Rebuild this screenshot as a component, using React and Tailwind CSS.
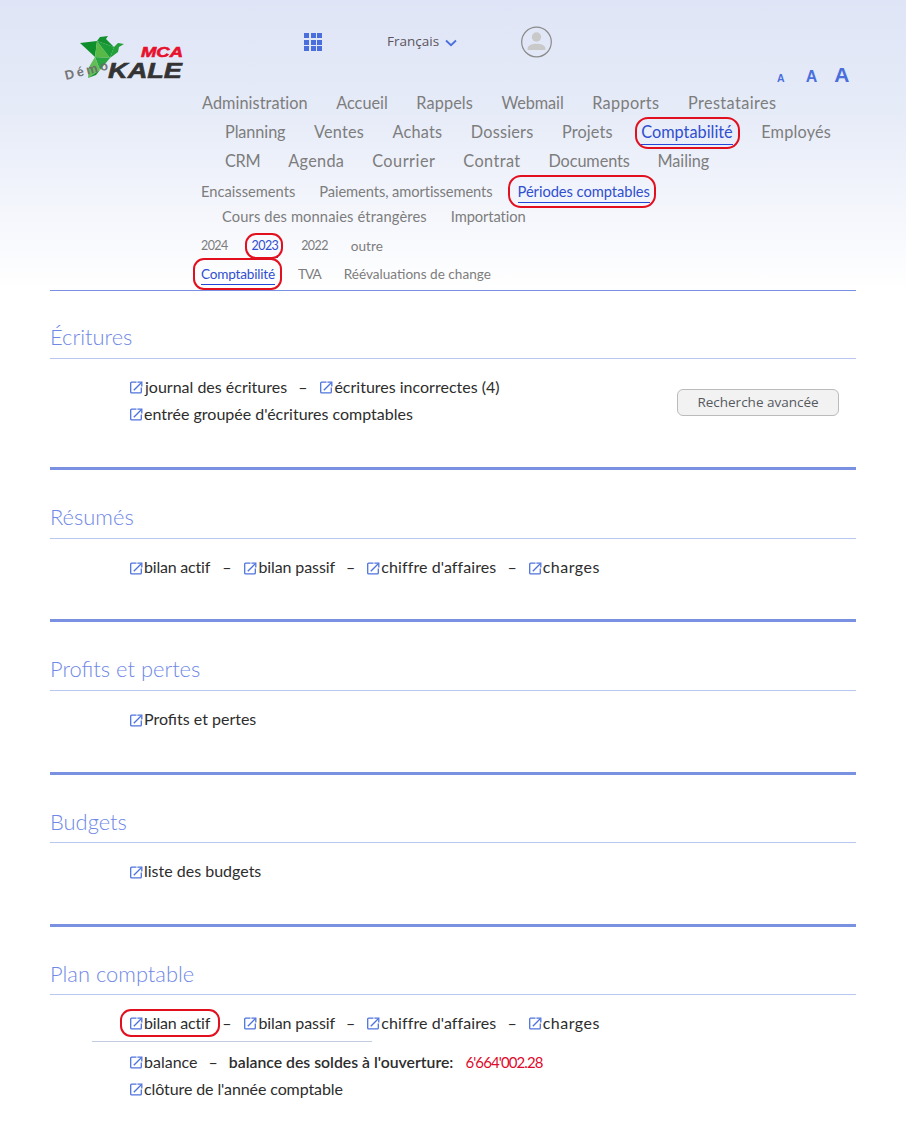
const font = "font-['Lato','Noto_Sans',sans-serif]";

function Ext() {
  return (
    <svg width="13" height="13" viewBox="0 0 13 13" fill="none" className="shrink-0 mr-px translate-y-px" stroke="#4f73dc" strokeWidth="1.3">
      <path d="M6.5 1.2H1.6a.9.9 0 0 0-.9.9v8.8c0 .5.4.9.9.9h8.8c.5 0 .9-.4.9-.9V6.5" />
      <path d="M3.8 9.2 11 2" />
      <path d="M7.4 1.2h4.4v4.4" />
    </svg>
  );
}

function L({ children, className = "" }) {
  return (
    <span className={`inline-flex items-center whitespace-nowrap ${className}`}>
      <Ext />
      {children}
    </span>
  );
}

function Ring({ className }) {
  return <span className={`absolute border-2 border-[#e2101f] pointer-events-none ${className}`} />;
}

function Active({ children, ring, line, className = "" }) {
  return (
    <span className={`relative whitespace-nowrap text-[#2f4fd0] ${className}`}>
      {children}
      <span className={`absolute left-0 right-0 h-px bg-[#2446d8] ${line}`} />
      <Ring className={ring} />
    </span>
  );
}

function Section({ title, children, last, headTop = "pt-[33px] pb-[7px]" }) {
  return (
    <section className={last ? "" : "border-b-[3px] border-[#7a90e0]"}>
      <h2 className={`${headTop} font-light text-[21.9px] leading-[28px] text-[#6f88e6] border-b border-[#b9c6f0]`}>{title}</h2>
      {children}
    </section>
  );
}

function Logo() {
  const f = "'Liberation Sans',sans-serif";
  return (
    <svg width="124" height="52" viewBox="0 0 124 52" className="block" style={{ overflow: "visible" }}>
      <polygon points="16,9 33,7 31,23" fill="#0e8f2b" />
      <polygon points="33,7 31,23 46,24" fill="#58b947" />
      <polygon points="33,7 46,24 50,13" fill="#1c9c36" />
      <polygon points="33,7 36,3 44,2 42,5 50,13" fill="#13912e" />
      <polygon points="50,13 54,9 60,10 55,13 54,18 46,24" fill="#23a03a" />
      <polygon points="31,23 46,24 36,36" fill="#2aa640" />
      <polygon points="31,23 36,36 24,44 25,33" fill="#63bd59" />
      <polygon points="24,44 36,36 32,41" fill="#0e8f2b" />
      <text x="77" y="23" fontFamily={f} fontWeight="700" fontStyle="italic" fontSize="15" fill="#e8112d" stroke="#e8112d" strokeWidth="0.6" textLength="42" lengthAdjust="spacingAndGlyphs">MCA</text>
      <text x="44" y="44" fontFamily={f} fontWeight="700" fontStyle="italic" fontSize="22" fill="#333" stroke="#333" strokeWidth="0.6" textLength="74" lengthAdjust="spacingAndGlyphs">KALE</text>
      <text x="2" y="46" fontFamily={f} fontWeight="700" fontSize="13" fill="#6b6b6b" textLength="44" transform="rotate(-14 2 46)" fillOpacity="0.92">Démo</text>
    </svg>
  );
}

function Grid() {
  return (
    <div className="grid grid-cols-3 gap-[1.5px] w-[18px]">
      {Array.from({ length: 9 }).map((_, i) => (
        <span key={i} className="w-[5px] h-[5px] bg-[#4a6fdc]" />
      ))}
    </div>
  );
}

function Avatar() {
  return (
    <svg width="31" height="32" viewBox="0 0 31 32">
      <circle cx="15.5" cy="16" r="14.8" fill="none" stroke="#8a8a8a" strokeWidth="1.2" />
      <circle cx="15.5" cy="11" r="4.7" fill="#c9c9c9" />
      <path d="M6.5 23c0-3.6 4.4-5.2 9-5.2s9 1.6 9 5.2c0 .7-.5 1-1 1H7.500c-.5 0-1-.3-1-1z" fill="#c9c9c9" />
    </svg>
  );
}

const row = "flex items-center h-[27px] whitespace-nowrap";
const dash = "ml-[11px] mr-[12px]";

function Summary({ first }) {
  return (
    <>
      {first || <L className="tracking-[-0.2px]">bilan actif</L>}
      <span className="ml-[12px] mr-[13px]">–</span>
      <L className="tracking-[-0.1px]">bilan passif</L>
      <span className={dash}>–</span>
      <L className="tracking-[0.1px]">chiffre d'affaires</L>
      <span className={dash}>–</span>
      <L className="tracking-[0.5px]">charges</L>
    </>
  );
}

export default function App() {
  return (
    <div className={`${font} bg-[linear-gradient(to_bottom,#dfe5f6_0px,#e6ebf8_110px,#ffffff_290px)] bg-no-repeat h-[1125px] text-[#2d2d2d] text-[16px] overflow-hidden`}>
      <div className="mx-[50px]">
        <header className="h-[291px] border-b border-[#7a90e0] text-[#7d7d7d]">
          <div className="flex items-start h-[88px]">
            <div className="ml-[14px] mt-[34px]"><Logo /></div>
            <div className="ml-[116px] mt-[33px]"><Grid /></div>
            <div className="ml-[65px] mt-[32px] flex items-center font-['Open_Sans',sans-serif] text-[13.5px] text-[#5b5560] leading-[19px]">
              Français
              <svg width="12" height="8" viewBox="0 0 12 8" className="ml-[6px] mt-[2px]" fill="none" stroke="#4a6fdc" strokeWidth="1.8"><path d="M1 1.5 6 6.2 11 1.5" /></svg>
            </div>
            <div className="ml-[64px] mt-[26px]"><Avatar /></div>
            <div className="ml-[225px] mt-[63px] flex items-baseline font-['Liberation_Sans',sans-serif] font-bold text-[#4a6fdc] leading-[24px]">
              <span className="text-[10.5px]">A</span>
              <span className="ml-[21px] text-[16px]">A</span>
              <span className="ml-[17px] text-[21px]">A</span>
            </div>
          </div>
          <div className="text-[16.3px] leading-[29px] whitespace-nowrap">
            <div className="ml-[152px] h-[29px] flex items-center gap-[28.5px]">
              <span className="tracking-[0.05px]">Administration</span>
              <span>Accueil</span>
              <span className="tracking-[0.1px]">Rappels</span>
              <span className="tracking-[-0.1px]">Webmail</span>
              <span className="tracking-[0.35px]">Rapports</span>
              <span className="tracking-[0.4px]">Prestataires</span>
            </div>
            <div className="ml-[175px] h-[29px] flex items-center gap-[28.5px]">
              <span className="tracking-[-0.1px]">Planning</span>
              <span className="tracking-[0.2px]">Ventes</span>
              <span className="tracking-[0.2px]">Achats</span>
              <span className="tracking-[0.2px]">Dossiers</span>
              <span className="tracking-[0.15px]">Projets</span>
              <Active line="bottom-[1px]" ring="-left-[6px] -right-[7px] top-0 -bottom-[3px] rounded-[13px]">Comptabilité</Active>
              <span className="tracking-[0.2px]">Employés</span>
            </div>
            <div className="ml-[175px] h-[29px] flex items-center gap-[27.9px]">
              <span className="tracking-[-0.3px]">CRM</span>
              <span className="tracking-[0.3px]">Agenda</span>
              <span className="tracking-[0.5px]">Courrier</span>
              <span className="tracking-[0.4px]">Contrat</span>
              <span className="tracking-[-0.1px]">Documents</span>
              <span className="tracking-[-0.1px]">Mailing</span>
            </div>
          </div>
          <div className="text-[14.7px] leading-[25px] mt-[4px]">
            <div className="ml-[151px] h-[25px] flex items-center gap-[24px]">
              <span>Encaissements</span>
              <span className="tracking-[-0.1px]">Paiements, amortissements</span>
              <Active line="bottom-[1px]" ring="-left-[10px] -right-[6px] -top-[4px] -bottom-[4px] rounded-[13px]" className="tracking-[-0.05px] ml-[1px]">Périodes comptables</Active>
            </div>
            <div className="ml-[172px] h-[25px] flex items-center gap-[24px]">
              <span className="tracking-[0.12px]">Cours des monnaies étrangères</span><span className="tracking-[-0.1px]">Importation</span>
            </div>
          </div>
          <div className="text-[13.6px] leading-[28px] ml-[151px]">
            <div className="h-[28px] mt-[3px] flex items-center gap-[23px]">
              <span className="text-[12.5px] tracking-[-0.6px]">2024</span>
              <Active line="bottom-[2px]" ring="-left-[7px] -right-[5px] top-[1px] bottom-[1px] rounded-[11px]" className="text-[12.5px] tracking-[-0.6px] ml-[1px]">2023</Active>
              <span className="text-[12.5px] tracking-[-0.6px]">2022</span><span>outre</span>
            </div>
            <div className="h-[28px] flex items-center gap-[23px]">
              <Active line="bottom-[3px]" ring="-left-[8px] -right-[7px] -top-[2px] -bottom-[2px] rounded-[11px]" className="tracking-[-0.2px]">Comptabilité</Active>
              <span className="tracking-[-1px]">TVA</span><span>Réévaluations de change</span>
            </div>
          </div>
        </header>

        <Section title="Écritures" headTop="pt-[32px] pb-[7px]">
          <div className="pl-[80px] pt-[14px] pb-[40px] flex justify-between items-start">
            <div>
              <div className={row}><L><span className="ml-px">journal des écritures</span></L><span className="ml-[11px] mr-[13px]">–</span><L>écritures incorrectes (4)</L></div>
              <div className={row}><L>entrée groupée d'écritures comptables</L></div>
            </div>
            <button className="mr-[17px] mt-[15.500px] w-[162px] h-[27px] rounded-[6px] border border-[#bbbbbb] bg-[#f2f2f2] font-['Open_Sans',sans-serif] text-[13.5px] text-[#55595f]">Recherche avancée</button>
          </div>
        </Section>

        <Section title="Résumés">
          <div className="pl-[80px] pt-[14.5px] pb-[38.5px]">
            <div className={row}><Summary /></div>
          </div>
        </Section>

        <Section title="Profits et pertes">
          <div className="pl-[80px] pt-[14.5px] pb-[39.5px]">
            <div className={row}><L>Profits et pertes</L></div>
          </div>
        </Section>

        <Section title="Budgets" headTop="pt-[33px] pb-[6px]">
          <div className="pl-[80px] pt-[14.5px] pb-[39.5px]">
            <div className={row}><L>liste des budgets</L></div>
          </div>
        </Section>

        <Section title="Plan comptable" last headTop="pt-[33px] pb-[6px]">
          <div className="pt-[14px]">
            <div className="ml-[42px] w-[280px] border-b border-[#c3cbe3] pl-[38px] h-[33px]">
              <div className={row}>
                <Summary
                  first={
                    <span className="relative inline-flex">
                      <L className="tracking-[-0.2px]">bilan actif</L>
                      <Ring className="-left-[10px] -right-[10px] -top-[2px] -bottom-[2px] rounded-[11px]" />
                    </span>
                  }
                />
              </div>
            </div>
            <div className="pl-[80px] pt-[6px]">
              <div className={row}>
                <L>balance</L><span className="ml-[11px] mr-[11px]">–</span><span className="font-semibold text-[15.8px]">balance des soldes à l'ouverture:</span>
                <span className="ml-[12px] mt-[1px] text-[15px] text-[#dd0a2c] tracking-[-0.9px]">6'664'002.28</span>
              </div>
              <div className={row}><L className="tracking-[-0.1px]">clôture de l'année comptable</L></div>
            </div>
          </div>
        </Section>
      </div>
    </div>
  );
}
